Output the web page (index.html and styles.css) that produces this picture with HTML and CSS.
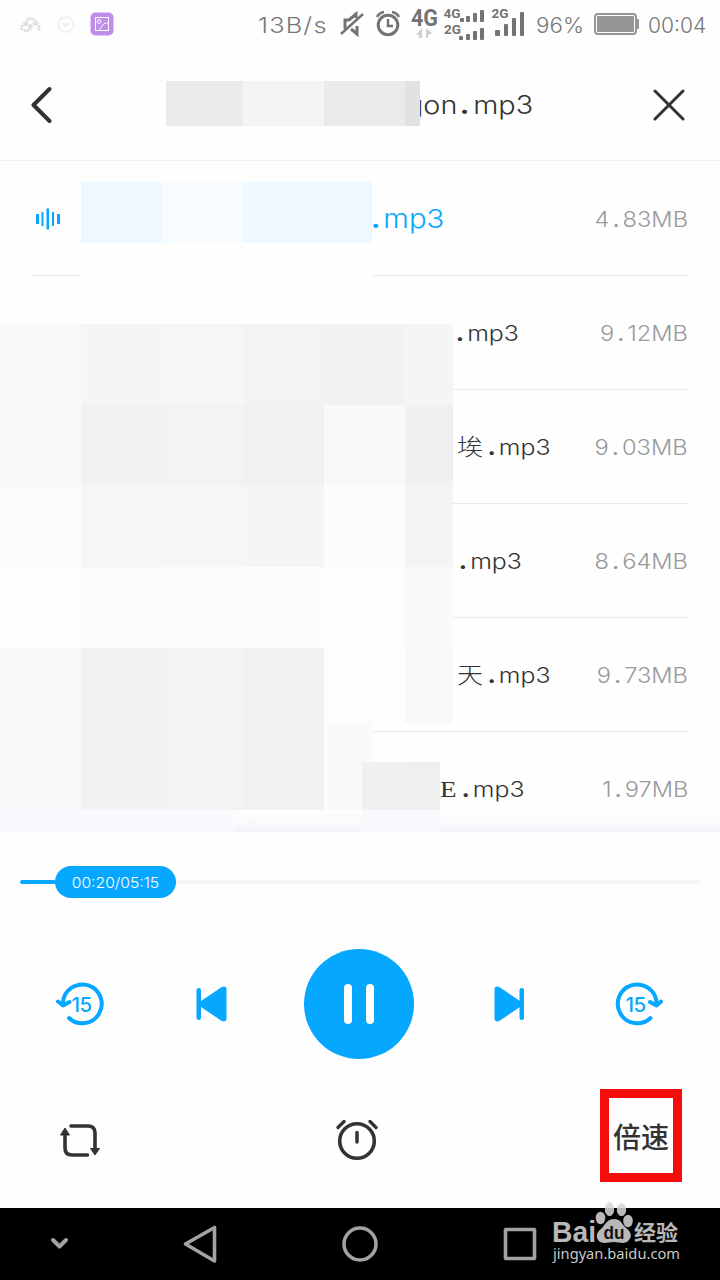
FILE: index.html
```html
<!DOCTYPE html>
<html lang="zh-CN">
<head>
  <meta charset="UTF-8">
  <meta name="viewport" content="width=device-width, initial-scale=1.0">
  <title>音频播放</title>
  <link rel="stylesheet" href="styles.css">
</head>
<body>
  <div class="screen">

    <div class="status-bar">
      <svg class="status-left" width="130" height="48" viewBox="0 0 130 48" fill="none">
        <path d="M22 30c-1-4 1-6 4-6 0-7 8-7 10-1 3 2 3 5 3 8M24 30c3 3 5-1 8-4l4-4M26 24l6 3" stroke="#dadada" stroke-width="3" stroke-dasharray="2 1"/>
        <circle cx="66" cy="24.500" r="7.500" stroke="#f2f2f2" stroke-width="2"/>
        <path d="M63 23l3 3 3-3" stroke="#ececec" stroke-width="2"/>
        <rect x="90.500" y="12.500" width="23" height="23" rx="5" fill="#c18dea"/>
        <rect x="95.500" y="17.500" width="13" height="13" stroke="#fff"/>
        <circle cx="99" cy="21.500" r="1.800" stroke="#fff"/>
        <path d="M100 30c0-3 2-3 3-5s3-2 5-2" stroke="#fff"/>
      </svg>
      <span class="speed">13B/s</span>
      <svg class="status-icons" width="200" height="48" viewBox="336 0 200 48" fill="none">
        <g stroke="#737373" stroke-width="2.400">
          <path d="M341 34l22-20"/>
          <path d="M345 29v-9h4l7-6v4M357 26v8l-6-5" stroke-width="3"/>
          <circle cx="388" cy="25" r="9.800" stroke-width="3"/>
          <path d="M388 19v7h5" stroke-width="2.500"/>
          <path d="M377 17q2-4 7-5M399 17q-2-4-7-5" stroke-width="2.500"/>
        </g>
        <g fill="#737373" class="net">
          <text x="411" y="26" font-size="24" textLength="27" lengthAdjust="spacingAndGlyphs">4G</text>
          <text x="443.500" y="18" font-size="13.500" textLength="17" lengthAdjust="spacingAndGlyphs">4G</text>
          <text x="444" y="34" font-size="13.500" textLength="17" lengthAdjust="spacingAndGlyphs">2G</text>
          <text x="491.500" y="18" font-size="13.500" textLength="17" lengthAdjust="spacingAndGlyphs">2G</text>
          <rect x="460" y="18" width="4" height="4" rx="1"/>
          <rect x="466" y="16" width="4" height="6" rx="1"/>
          <rect x="473" y="13" width="4" height="9" rx="1"/>
          <rect x="480" y="10" width="4" height="12" rx="1"/>
          <rect x="459" y="36" width="4" height="4" rx="1"/>
          <rect x="466" y="34" width="4" height="6" rx="1"/>
          <rect x="473" y="31" width="4" height="9" rx="1"/>
          <rect x="480" y="28" width="4" height="12" rx="1"/>
          <rect x="495" y="30" width="5" height="6" rx="1"/>
          <rect x="504" y="24" width="4" height="12" rx="1"/>
          <rect x="512" y="18" width="4" height="18" rx="1"/>
          <rect x="520" y="12" width="4" height="24" rx="1"/>
        </g>
        <path d="M422 28v10h-3v-3h-3zM426 28v10h2v-3l4-2z" fill="#cfcfcf"/>
      </svg>
      <span class="percent">96%</span>
      <svg class="battery" width="45" height="22" viewBox="0 0 45 22">
        <rect x="1" y="1" width="41" height="20" rx="3" fill="none" stroke="#969696" stroke-width="2"/>
        <rect x="3" y="3" width="37" height="16" fill="#969696"/>
        <rect x="43" y="6" width="2" height="10" fill="#969696"/>
      </svg>
      <span class="clock">00:04</span>
    </div>

    <header class="title-bar">
      <svg class="back" width="22" height="38" viewBox="0 0 22 38">
        <path d="M18.500 3L2.500 19l16 16" fill="none" stroke="#333" stroke-width="4" stroke-linecap="round" stroke-linejoin="round"/>
      </svg>
      <div class="title-mask">
        <i class="m-eb"></i><i class="m-f4"></i><i class="m-ea"></i><i class="m-e2"></i>
      </div>
      <h1 class="title">gon<b>.</b>mp3</h1>
      <svg class="close" width="32" height="32" viewBox="0 0 32 32">
        <path d="M2 2l28 28M30 2L2 30" stroke="#333" stroke-width="3" stroke-linecap="round"/>
      </svg>
    </header>

    <main class="list">
      <div class="row playing">
        <svg class="wave" width="24" height="22" viewBox="0 0 24 22" fill="#06a7ff">
          <rect x="0" y="6" width="3" height="10"/>
          <rect x="5.500" y="4" width="2" height="14"/>
          <rect x="10.500" y="0.500" width="2.500" height="21"/>
          <rect x="16" y="4" width="2" height="14"/>
          <rect x="21" y="6" width="3" height="10"/>
        </svg>
        <span class="name"><b>.</b>mp3</span>
        <span class="size">4<b>.</b>83MB</span>
      </div>
      <div class="row">
        <span class="name name-2"><b>.</b>mp3</span>
        <span class="size">9<b>.</b>12MB</span>
      </div>
      <div class="row">
        <span class="name name-3"><em>埃</em><b>.</b>mp3</span>
        <span class="size">9<b>.</b>03MB</span>
      </div>
      <div class="row">
        <span class="name name-4"><b>.</b>mp3</span>
        <span class="size">8<b>.</b>64MB</span>
      </div>
      <div class="row">
        <span class="name name-5"><em>天</em><b>.</b>mp3</span>
        <span class="size">9<b>.</b>73MB</span>
      </div>
      <div class="row">
        <span class="name name-6"><u>E</u><b>.</b>mp3</span>
        <span class="size">1<b>.</b>97MB</span>
      </div>
      <div class="list-shade"></div>

      <!-- mosaic over the file names -->
      <div class="mask mask-first">
        <i></i><i class="light"></i><i></i>
      </div>
      <div class="mask mask-names">
        <i class="m-f9"></i><i class="m-f5"></i><i class="m-f6"></i><i class="m-f3"></i><i class="m-f2"></i><i class="m-f5"></i>
        <i class="m-f9"></i><i class="m-f2"></i><i class="m-f3"></i><i class="m-f1"></i><i class="m-f9"></i><i class="m-f0"></i>
        <i class="m-fb"></i><i class="m-f6"></i><i class="m-f6"></i><i class="m-f5"></i><i class="m-fc"></i><i class="m-f4"></i>
        <i class="m-fd"></i><i class="m-fb"></i><i class="m-fc"></i><i class="m-fc"></i><i class="m-fd"></i><i class="m-fa"></i>
        <i class="m-f9"></i><i class="m-f2"></i><i class="m-f3"></i><i class="m-f1"></i><i class="m-fd"></i><i class="m-f8"></i>
      </div>
      <div class="mask mask-last">
        <i class="m-f9"></i><i class="m-f2"></i><i class="m-f3"></i><i class="m-f1"></i><i class="m-fa"></i>
      </div>
      <div class="mask mask-small"><i class="m-f0"></i><i class="m-ef"></i></div>
      <div class="mask mask-foot"></div>
    </main>

    <section class="player">
      <div class="progress">
        <div class="played"></div>
        <div class="time"><span>00:20/05:15</span></div>
        <div class="remain"></div>
      </div>

      <div class="controls">
        <svg width="48" height="44" viewBox="56 982 48 44">
          <g fill="none" stroke="#06a7ff" stroke-width="4" stroke-linecap="round" stroke-linejoin="round">
            <path d="M63 1002a19.400 19.400 0 1 1 6 16"/>
            <path d="M58 1001.500l5 4 6.500-3.500"/>
          </g>
          <text class="fifteen" x="71.500" y="1012">15</text>
        </svg>
        <svg class="prev" width="32" height="38" viewBox="0 0 32 38" fill="#06a7ff">
          <rect x="0.500" y="3" width="4.500" height="32" rx="2.200"/>
          <path d="M5 16L25 2.500Q30 0 30.500 4v30q-.5 4-5.500 1.500L5 22z"/>
        </svg>
        <button class="pause"><span></span><span></span></button>
        <svg class="next" width="32" height="38" viewBox="0 0 32 38" fill="#06a7ff">
          <rect x="26.500" y="3" width="4.500" height="32" rx="2.200"/>
          <path d="M27 16L7 2.500Q2 0 1.500 4v30q.5 4 5.500 1.500L27 22z"/>
        </svg>
        <svg width="48" height="44" viewBox="615 982 48 44">
          <g fill="none" stroke="#06a7ff" stroke-width="4" stroke-linecap="round" stroke-linejoin="round">
            <path d="M656.500 1002a19.400 19.400 0 1 0-6 16"/>
            <path d="M661 1001.500l-4.500 4-6.500-3.500"/>
          </g>
          <text class="fifteen" x="625.500" y="1012">15</text>
        </svg>
      </div>

      <div class="tools">
        <svg width="40" height="34" viewBox="60 1123 40 34">
          <g fill="none" stroke="#333" stroke-width="3.600" stroke-linecap="round">
            <path d="M71 1126h17q7 0 7 7v16"/>
            <path d="M87.500 1155H72q-7 0-7-7v-15"/>
          </g>
          <path d="M65 1128l4.500 7h-9zM95 1155l4.500-6.500h-9z" fill="#333" stroke="#333" stroke-linejoin="round"/>
        </svg>
        <svg class="alarm" width="42" height="42" viewBox="336 1120 42 42" fill="none" stroke="#333" stroke-linecap="round">
          <circle cx="357" cy="1142" r="17.300" stroke-width="3.600"/>
          <path d="M357 1133.500v9.500" stroke-width="3.500"/>
          <path d="M338 1128.500l6-6M376 1128.500l-6-6" stroke-width="3.300"/>
        </svg>
        <div class="rate">倍速</div>
      </div>
    </section>

    <nav class="nav-bar">
      <svg width="720" height="72" viewBox="0 1208 720 72" fill="none" stroke="#a3a3a3" stroke-linecap="round" stroke-linejoin="round">
        <path d="M53 1240l6.500 6.500 6.500-6.500" stroke-width="4"/>
        <path d="M214.500 1227.500v33.500l-29-17z" stroke-width="3.600"/>
        <circle cx="360" cy="1244" r="16" stroke-width="3.500"/>
        <rect x="505.500" y="1229.500" width="29" height="29" stroke-width="3.600"/>
      </svg>
    </nav>

    <svg class="watermark" width="136" height="66" viewBox="548 1200 136 66">
      <g fill="#b8b8b8">
        <text class="bai" x="552" y="1242" textLength="44" lengthAdjust="spacingAndGlyphs">Bai</text>
        <ellipse cx="600.500" cy="1218" rx="4.800" ry="6.200"/>
        <ellipse cx="628" cy="1221" rx="4.800" ry="6.200"/>
        <ellipse cx="609.500" cy="1209" rx="4.600" ry="6.800" fill="#dcdcdc"/>
        <ellipse cx="621.500" cy="1209.500" rx="4.600" ry="6.300" fill="#dcdcdc"/>
        <path d="M605 1208h9.100q-.3 8-4.600 8t-4.600-8zM617 1208h9q0 8-4.500 8t-4.500-8z"/>
        <path d="M614 1219c7 0 7 4 11 8 5 4 8 8 4 13-4 5-9 2-15 2s-12 3-16-2c-3-5 0-9 4-12 4-5 6-9 12-9z"/>
        <text class="jy" x="634" y="1240" textLength="44" lengthAdjust="spacingAndGlyphs">经验</text>
      </g>
      <text class="du" x="603.500" y="1239" textLength="21" lengthAdjust="spacingAndGlyphs">du</text>
      <text class="url" x="553" y="1259" textLength="127" lengthAdjust="spacingAndGlyphs">jingyan.baidu.com</text>
    </svg>
  </div>
</body>
</html>
```
FILE: styles.css
```css
* {
  box-sizing: border-box;
}

body {
  margin: 0;
  background: #fefefe;
  color: #333;
  font-family: Inter, "Noto Sans CJK SC", sans-serif;
}

.screen {
  position: relative;
  display: flex;
  flex-direction: column;
  width: 720px;
  height: 1280px;
  overflow: hidden;
}

svg {
  display: block;
  flex: none;
}

/* status bar */
.status-bar {
  display: flex;
  align-items: center;
  height: 48px;
  color: #777;
  font-size: 21.5px;
  font-weight: 300;
  white-space: nowrap;
}

.status-bar span {
  flex: none;
  padding-top: 1px;
  transform-origin: left;
}

.speed {
  width: 76px;
  margin-left: 130px;
  letter-spacing: 1px;
  transform: scaleX(1.18);
}

.status-left {
  margin-right: -2px;
}

.status-icons {
  margin-left: 2px;
}

.percent {
  width: 58px;
  transform: scaleX(1.04);
}

.clock {
  margin-left: 9px;
  transform: scaleX(0.98);
}

.net {
  font-family: Roboto, sans-serif;
  font-weight: 700;
}

/* title */
.title-bar {
  display: flex;
  align-items: center;
  height: 113px;
  padding: 0 35px 0 31px;
  border-bottom: 1px solid #eeeef5;
  margin-bottom: 1px;
}

.back,
.close {
  margin-top: 1px;
}

.title-mask {
  position: relative;
  z-index: 1;
  display: grid;
  grid-template-columns: 77px 81px 81px 15px;
  height: 45px;
  margin: -1px 0 0 113px;
}

.title {
  flex: 1;
  margin: 1px 0 0 -14px;
  font-size: 25.5px;
  font-weight: 300;
  line-height: 40px;
  transform: scaleX(1.13);
  transform-origin: left;
}

/* file list */
.list {
  position: relative;
  height: 670px;
  overflow: hidden;
}

.row {
  display: flex;
  align-items: center;
  height: 114px;
  margin: 0 32px;
  border-bottom: 1px solid #ebebeb;
}

.wave {
  margin: 0 312px 0 4px;
}

.name {
  font-size: 22px;
  line-height: 40px;
  font-weight: 300;
  white-space: nowrap;
  padding-top: 1px;
  transform: scaleX(1.13);
  transform-origin: left;
}

.playing .name {
  color: #06a7ff;
  font-size: 26px;
}

.name b,
.title b {
  display: inline-block;
  width: 10px;
  margin-left: -1px;
  font-weight: 700;
}

.title b {
  width: 12px;
  margin-left: 2px;
}

.playing .name b {
  width: 11px;
}

.name em {
  display: inline-block;
  width: 28px;
  font-family: "Noto Sans CJK SC", sans-serif;
  font-style: normal;
  font-size: 23px;
  line-height: 30px;
}

.name u {
  display: inline-block;
  width: 20px;
  font-family: "Liberation Serif", serif;
  font-size: 24px;
  line-height: 30px;
  text-decoration: none;
}

.name-2 { margin-left: 425px; }
.name-3 { margin-left: 425px; }
.name-4 { margin-left: 428px; }
.name-5 { margin-left: 425px; }
.name-6 { margin-left: 408px; }

.size {
  margin-left: auto;
  padding-top: 1px;
  color: #999;
  font-size: 21.5px;
  font-weight: 300;
  transform: scaleX(1.1);
  transform-origin: right;
}

.size b {
  display: inline-block;
  width: 12px;
  font-weight: 500;
  text-align: center;
}

.list-shade {
  position: absolute;
  left: 234px;
  right: 0;
  bottom: 0;
  height: 21px;
  background: linear-gradient(rgba(243, 245, 249, 0), #f3f5f8);
}

/* mosaic */
.mask {
  position: absolute;
  left: 0;
  display: grid;
}

.mask-first {
  left: 81px;
  top: 20px;
  grid-template-columns: 81px 81px 129px;
  grid-template-rows: 61px;
  height: 100px;
  background: #fefefe;
}

.mask-first i { background: #edf8ff; }
.mask-first .light { background: #f6fcff; }

.mask-names {
  top: 162px;
  grid-template-columns: repeat(5, 81px) 48px;
  grid-template-rows: repeat(4, 81px) 75px;
}

.mask-last {
  top: 561px;
  grid-template-columns: repeat(4, 81px) 48px;
  grid-template-rows: 87px;
}

.mask-small {
  left: 362px;
  top: 600px;
  grid-template-columns: 43px 35px;
  grid-template-rows: 48px;
  height: 69px;
  background: #f8f9fc;
}

.mask-foot {
  top: 648px;
  width: 234px;
  height: 22px;
  background: #f8fafd;
  border-bottom: 1px solid #f3f5f8;
}

.m-e2 { background: #e2e2e2; }
.m-ea { background: #eaeaea; }
.m-eb { background: #ebebeb; }
.m-ef { background: #efefef; }
.m-f0 { background: #f0f0f0; }
.m-f1 { background: #f1f1f1; }
.m-f2 { background: #f2f2f2; }
.m-f3 { background: #f3f3f3; }
.m-f4 { background: #f4f4f4; }
.m-f5 { background: #f5f5f5; }
.m-f6 { background: #f6f6f6; }
.m-f8 { background: #f8f8f8; }
.m-f9 { background: #f9f9f9; }
.m-fa { background: #fafafa; }
.m-fb { background: #fbfbfb; }
.m-fc { background: #fcfcfc; }
.m-fd { background: #fdfdfd; }

/* player */
.player {
  height: 376px;
  padding-top: 34px;
}

.progress {
  display: flex;
  align-items: center;
  height: 32px;
  margin: 0 20px;
}

.played {
  width: 36px;
  height: 4px;
  margin-right: -1px;
  border-radius: 2px;
  background: #06a7ff;
}

.time {
  width: 121px;
  height: 32px;
  border-radius: 16px;
  background: #06a7ff;
  color: #fff;
  font-size: 14.5px;
  font-weight: 300;
  line-height: 33px;
  text-align: center;
}

.time span {
  display: inline-block;
  transform: scaleX(1.08);
}

.remain {
  flex: 1;
  height: 4px;
  border-radius: 2px;
  background: #f5f5f7;
}

.controls {
  display: flex;
  align-items: center;
  height: 110px;
  margin-top: 51px;
  padding-left: 56px;
}

.prev {
  margin: 0 76px 0 92px;
}

.next {
  margin: 0 90px 0 79px;
}

.fifteen {
  fill: #06a7ff;
  font: 500 20.5px Inter, sans-serif;
  letter-spacing: -0.5px;
}

.pause {
  display: flex;
  align-items: center;
  justify-content: center;
  gap: 14px;
  width: 110px;
  height: 110px;
  padding: 0;
  border: none;
  border-radius: 50%;
  background: #06a7ff;
}

.pause span {
  width: 8px;
  height: 40px;
  border-radius: 4px;
  background: #fff;
}

.tools {
  display: flex;
  align-items: center;
  justify-content: space-between;
  margin-top: 30px;
  padding: 0 38px 0 60px;
}

.tools svg {
  margin-top: 9px;
}

.tools .alarm {
  margin-left: 14px;
}

.rate {
  width: 82px;
  height: 93px;
  border: 9px solid #f50d0d;
  font-family: "Noto Sans CJK SC", sans-serif;
  font-size: 28px;
  font-weight: 500;
  line-height: 77px;
  text-align: center;
}

.nav-bar {
  height: 72px;
  background: #000;
}

.watermark {
  position: absolute;
  left: 548px;
  top: 1200px;
}

.bai {
  font: 700 29px "Liberation Sans", sans-serif;
}

.jy {
  font: 700 21px "Noto Sans CJK SC", sans-serif;
}

.du {
  font: 700 18px "Liberation Sans", sans-serif;
  fill: #111;
}

.url {
  font: 400 15px "Noto Sans", sans-serif;
  fill: #c8c8c8;
}
```
